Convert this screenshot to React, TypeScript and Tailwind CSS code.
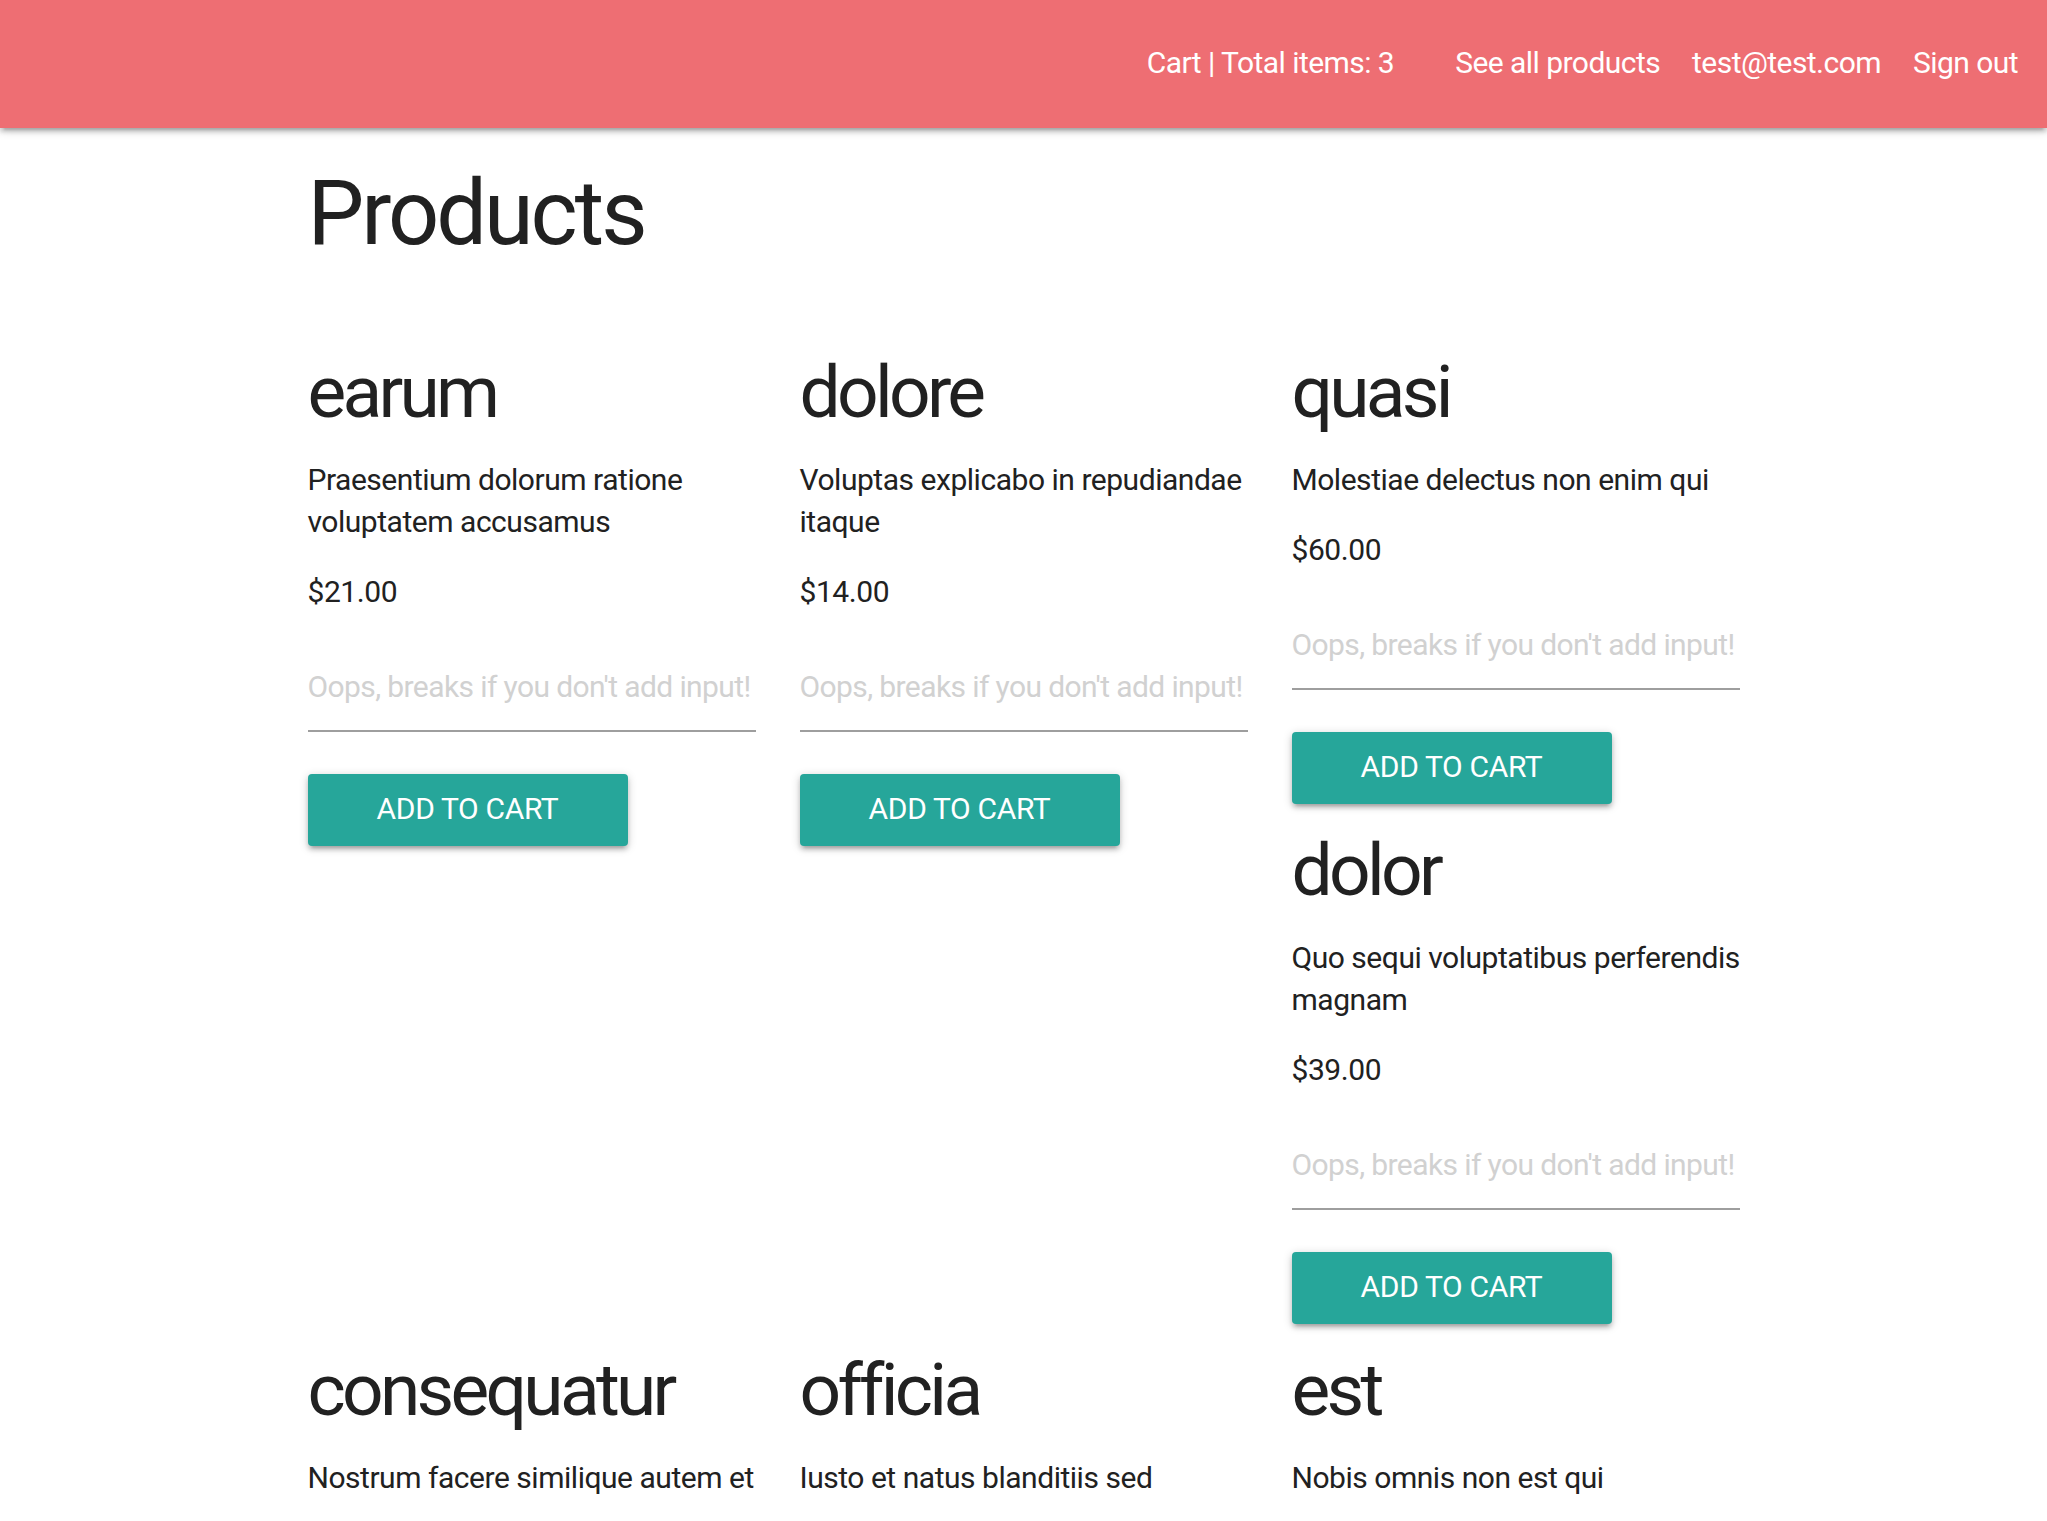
type Product = {
	name: string;
	description: string;
	price: string;
};

const columns: Product[][] = [
	[
		{ name: "earum", description: "Praesentium dolorum ratione voluptatem accusamus", price: "$21.00" },
	],
	[
		{ name: "dolore", description: "Voluptas explicabo in repudiandae itaque", price: "$14.00" },
	],
	[
		{ name: "quasi", description: "Molestiae delectus non enim qui", price: "$60.00" },
		{ name: "dolor", description: "Quo sequi voluptatibus perferendis magnam", price: "$39.00" },
	],
];

const secondRow: Product[] = [
	{ name: "consequatur", description: "Nostrum facere similique autem et", price: "$47.00" },
	{ name: "officia", description: "Iusto et natus blanditiis sed", price: "$18.00" },
	{ name: "est", description: "Nobis omnis non est qui", price: "$52.00" },
];

function ProductCard({ product }: { product: Product }) {
	return (
		<div className="pt-[26px]">
			<h4 className="text-[73px] leading-[80px] font-normal tracking-[-3.7px] text-[#212121]">{product.name}</h4>
			<p className="mt-[27px] w-[460px] text-[30px] leading-[42px] tracking-[-0.47px] text-[#212121]">{product.description}</p>
			<p className="mt-[28px] text-[30px] leading-[42px] tracking-[-0.43px] text-[#212121]">{product.price}</p>
			<input
				type="text"
				placeholder="Oops, breaks if you don't add input!"
				className="mt-[29px] block w-full h-[90px] border-b-2 border-[#9e9e9e] bg-transparent text-[30px] tracking-[-0.6px] text-[#212121] outline-none placeholder:text-[#d1d1d1]"
			/>
			<button className="mt-[42px] block w-[320px] h-[72px] rounded-[4px] bg-[#26a69a] text-white text-[30px] tracking-[-0.35px] uppercase pb-[3px] shadow-[0_4px_4px_0_rgba(0,0,0,0.14),0_6px_2px_-4px_rgba(0,0,0,0.12),0_2px_10px_0_rgba(0,0,0,0.2)]">
				Add to cart
			</button>
		</div>
	);
}

export default function App() {
	return (
		<div className="h-[1521px] overflow-hidden bg-white font-['Roboto',sans-serif] text-[#212121]">
			<nav className="relative z-10 h-[128px] bg-[#ee6e73] flex items-center justify-end pr-[29px] pb-[4px] text-white text-[30px] tracking-[-0.55px] shadow-[0_4px_4px_0_rgba(0,0,0,0.14),0_6px_2px_-4px_rgba(0,0,0,0.12),0_2px_10px_0_rgba(0,0,0,0.2)]">
				<a className="mr-[61px]">Cart | Total items: 3</a>
				<a className="mr-[32px]">See all products</a>
				<a className="mr-[32px]">test@test.com</a>
				<a>Sign out</a>
			</nav>
			<main className="w-[1432px] mx-auto">
				<h1 className="mt-[36px] mb-[62px] text-[90px] leading-[100px] font-normal tracking-[-3px]">Products</h1>
				<div className="grid grid-cols-[448px_448px_448px] gap-x-[44px] items-start">
					{columns.map((col, i) => (
						<div key={i}>
							{col.map((p) => (
								<ProductCard key={p.name} product={p} />
							))}
						</div>
					))}
				</div>
				<div className="grid grid-cols-[448px_448px_448px] gap-x-[44px] items-start">
					{secondRow.map((p) => (
						<ProductCard key={p.name} product={p} />
					))}
				</div>
			</main>
		</div>
	);
}
